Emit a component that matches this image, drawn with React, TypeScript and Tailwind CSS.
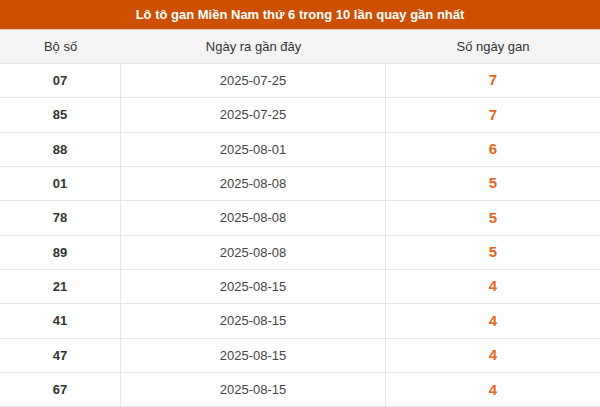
const rows = [
  { so: '07', ngay: '2025-07-25', gan: 7 },
  { so: '85', ngay: '2025-07-25', gan: 7 },
  { so: '88', ngay: '2025-08-01', gan: 6 },
  { so: '01', ngay: '2025-08-08', gan: 5 },
  { so: '78', ngay: '2025-08-08', gan: 5 },
  { so: '89', ngay: '2025-08-08', gan: 5 },
  { so: '21', ngay: '2025-08-15', gan: 4 },
  { so: '41', ngay: '2025-08-15', gan: 4 },
  { so: '47', ngay: '2025-08-15', gan: 4 },
  { so: '67', ngay: '2025-08-15', gan: 4 },
];

export default function App() {
  return (
    <div className="w-[600px] h-[407px] overflow-hidden bg-white font-['Liberation_Sans',Arial,sans-serif]">
      <div className="h-[29px] bg-[#cd4f02] flex items-center justify-center text-white text-[13px] font-bold">
        Lô tô gan Miền Nam thứ 6 trong 10 lần quay gần nhất
      </div>
      <div className="h-px bg-[#e9c8b2]" />
      <div className="grid grid-cols-[121px_265px_1fr] h-[34px] bg-[#f4f4f4] border-b border-[#e6e6e6] text-[13px] text-[#333]">
        <div className="flex items-center justify-center">Bộ số</div>
        <div className="flex items-center justify-center">Ngày ra gần đây</div>
        <div className="flex items-center justify-center">Số ngày gan</div>
      </div>
      {rows.map((r) => (
        <div
          key={r.so}
          className="grid grid-cols-[121px_265px_1fr] h-[34.35px] border-b border-[#e6e6e6]"
        >
          <div className="flex items-center justify-center border-r border-[#e6e6e6] text-[13px] font-bold text-[#333]">
            {r.so}
          </div>
          <div className="flex items-center justify-center border-r border-[#e6e6e6] text-[13px] text-[#444]">
            {r.ngay}
          </div>
          <div className="flex items-center justify-center text-[15px] font-bold text-[#e5661c]">
            {r.gan}
          </div>
        </div>
      ))}
    </div>
  );
}
